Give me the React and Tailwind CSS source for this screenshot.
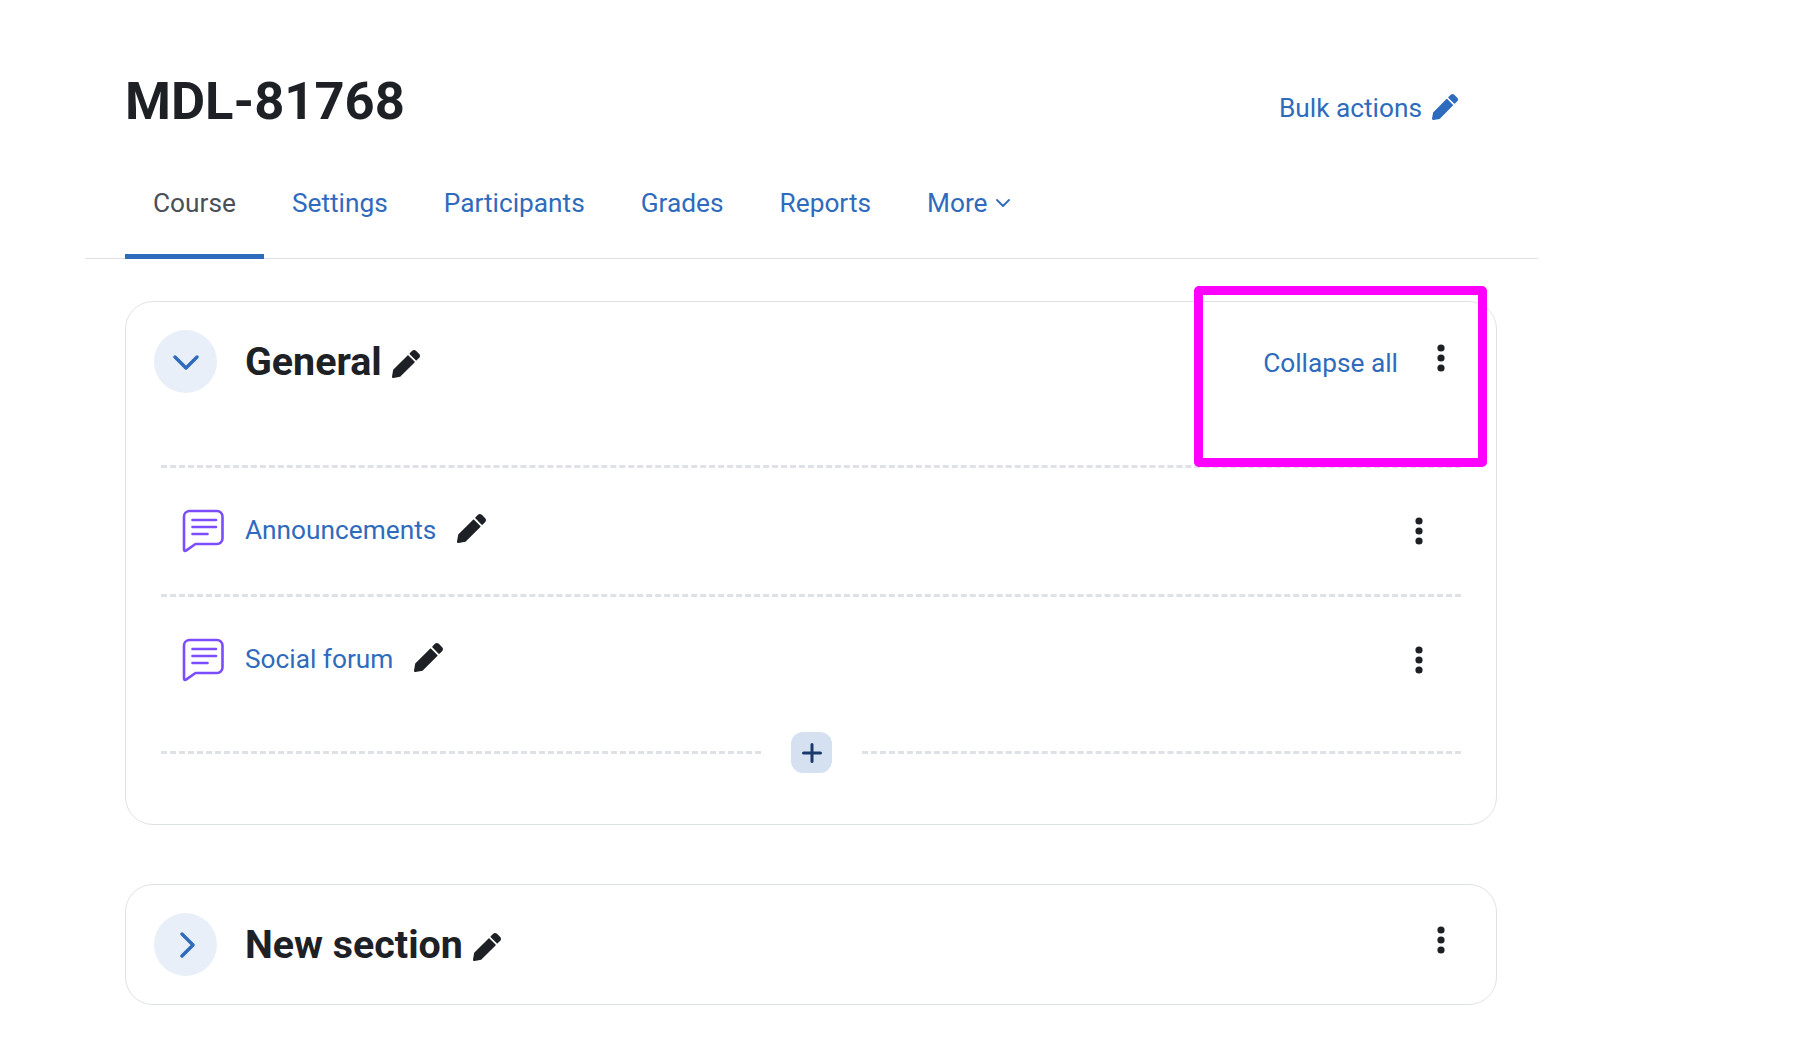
import React from "react";

const Pencil = ({ className = "" }) => (
  <svg viewBox="0 0 512 512" fill="currentColor" className={`shrink-0 ${className}`}>
    <path d="M497.9 142.1l-46.1 46.1c-4.7 4.7-12.3 4.7-17 0l-111-111c-4.7-4.7-4.7-12.3 0-17l46.1-46.1c18.7-18.7 49.1-18.7 67.9 0l60.1 60.1c18.8 18.7 18.8 49.1 0 67.9zM284.2 99.8L21.6 362.4.4 483.9c-2.9 16.4 11.4 30.6 27.8 27.8l121.5-21.3 262.6-262.6c4.7-4.7 4.7-12.3 0-17l-111-111c-4.8-4.7-12.4-4.7-17.1 0z" />
  </svg>
);

const Dots = ({ className = "" }) => (
  <svg width="8" height="28" viewBox="0 0 8 28" className={className} fill="#1d2125">
    <circle cx="4" cy="4" r="3.6" />
    <circle cx="4" cy="14" r="3.6" />
    <circle cx="4" cy="24" r="3.6" />
  </svg>
);

const Forum = () => (
  <svg width="44" height="44" viewBox="0 0 44 44" fill="none" stroke="#7b4dff" strokeWidth="2.6" strokeLinecap="round" strokeLinejoin="round" className="shrink-0">
    <path d="M8 2h28a5.5 5.5 0 0 1 5.5 5.5v22a5.5 5.5 0 0 1-5.5 5.5H14.5l-9.5 6.6q-2 1 -2 -1V7.5A5.5 5.5 0 0 1 8 2z" />
    <path d="M11.5 11h23.5M11.5 18h23.5M11.5 25h15" />
  </svg>
);

const Chevron = ({ open }) => (
  <button className="w-[63px] h-[63px] rounded-full bg-[#e8eff8] flex items-center justify-center shrink-0">
    <svg width="26" height="26" viewBox="0 0 26 26" fill="none" stroke="#2f6bbd" strokeWidth="3.4" strokeLinecap="round" strokeLinejoin="round">
      {open ? <path d="M2 8l11 11 11-11" /> : <path d="M9 2l11 11-11 11" />}
    </svg>
  </button>
);

const Dash = ({ className = "" }) => <div className={`border-t-[3px] border-dashed border-[#dee2e6] ${className}`} />;

const Activity = ({ name }) => (
  <div className="h-[126px] flex items-center pl-[20px] pr-[38px]">
    <Forum />
    <a className="ml-[20px] text-[#2f6bbd] text-[26.25px] leading-none -translate-y-[1px]">{name}</a>
    <Pencil className="ml-[21px] w-[29px] h-[29px] text-[#1d2125] -translate-y-[3px]" />
    <Dots className="ml-auto" />
  </div>
);

const tabs = ["Settings", "Participants", "Grades", "Reports"];

export default function App() {
  return (
    <div className="relative w-[1809px] h-[1049px] bg-white overflow-hidden font-['Roboto',sans-serif]">
      <div className="w-[1453px] ml-[85px]">
        <header className="h-[158px] pl-[40px] pr-[80px] flex items-start justify-between">
          <h1 className="mt-[67px] text-[52.5px] leading-[68px] font-bold text-[#1d2125]">MDL-81768</h1>
          <a className="mt-[90px] flex items-center text-[#2f6bbd] text-[26.25px] leading-[36px]">
            Bulk actions
            <Pencil className="ml-[10px] w-[26px] h-[26px] -translate-y-[1px]" />
          </a>
        </header>
        <nav className="h-[101px] pl-[40px] flex items-stretch border-b border-[#dee2e6] text-[26.25px]">
          <a className="px-[28px] pt-[26px] text-[#495057] border-b-[5px] border-[#2f6bbd] -mb-px">Course</a>
          {tabs.map((t) => (
            <a key={t} className="px-[28px] pt-[26px] text-[#2f6bbd]">{t}</a>
          ))}
          <a className="px-[28px] pt-[26px] text-[#2f6bbd] flex items-start gap-[8px]">
            More
            <svg width="14" height="8" viewBox="0 0 14 8" fill="none" stroke="currentColor" strokeWidth="1.8" strokeLinecap="round" strokeLinejoin="round" className="mt-[15px]">
              <path d="M1 1l6 6 6-6" />
            </svg>
          </a>
        </nav>
      </div>

      <main className="ml-[125px] w-[1372px] mt-[42px]">
        <section className="h-[524px] border border-[#dee2e6] rounded-[28px] px-[35px]">
          <div className="h-[163px] -ml-[7px] flex items-start pt-[28px]">
            <Chevron open />
            <div className="ml-[28px] h-[63px] flex items-center">
              <h2 className="text-[39.4px] font-bold leading-none text-[#1d2125]">General</h2>
              <Pencil className="ml-[10px] w-[28px] h-[28px] text-[#1d2125] translate-y-[2px]" />
            </div>
            <a className="ml-auto mt-[18px] text-[26.25px] leading-[30px] text-[#2f6bbd]">Collapse all</a>
            <Dots className="ml-[39px] mr-[16px] mt-[14px]" />
          </div>
          <Dash className="w-[1300px]" />
          <Activity name="Announcements" />
          <Dash className="w-[1300px]" />
          <Activity name="Social forum" />
          <div className="w-[1300px] flex items-center mt-[9px]">
            <Dash className="w-[600px]" />
            <button className="ml-[30px] w-[41px] h-[41px] rounded-[12px] bg-[#d5e1f0] flex items-center justify-center">
              <svg width="20" height="20" viewBox="0 0 20 20" stroke="#1a3a6b" strokeWidth="3" strokeLinecap="round">
                <path d="M10 1.5v17M1.5 10h17" />
              </svg>
            </button>
            <Dash className="ml-[30px] flex-1" />
          </div>
        </section>

        <section className="mt-[59px] h-[121px] border border-[#dee2e6] rounded-[28px] pl-[28px] pr-[50px] pt-[28px] flex items-start">
          <Chevron />
          <div className="ml-[28px] h-[63px] flex items-center">
            <h2 className="text-[39.4px] font-bold leading-none text-[#1d2125]">New section</h2>
            <Pencil className="ml-[10px] w-[28px] h-[28px] text-[#1d2125] translate-y-[2px]" />
          </div>
          <Dots className="ml-auto mt-[13px] mr-[1px]" />
        </section>
      </main>

      <div className="absolute left-[1194px] top-[286px] w-[293px] h-[181px] border-[9px] border-[#ff00ff] rounded-[5px]" />
    </div>
  );
}
